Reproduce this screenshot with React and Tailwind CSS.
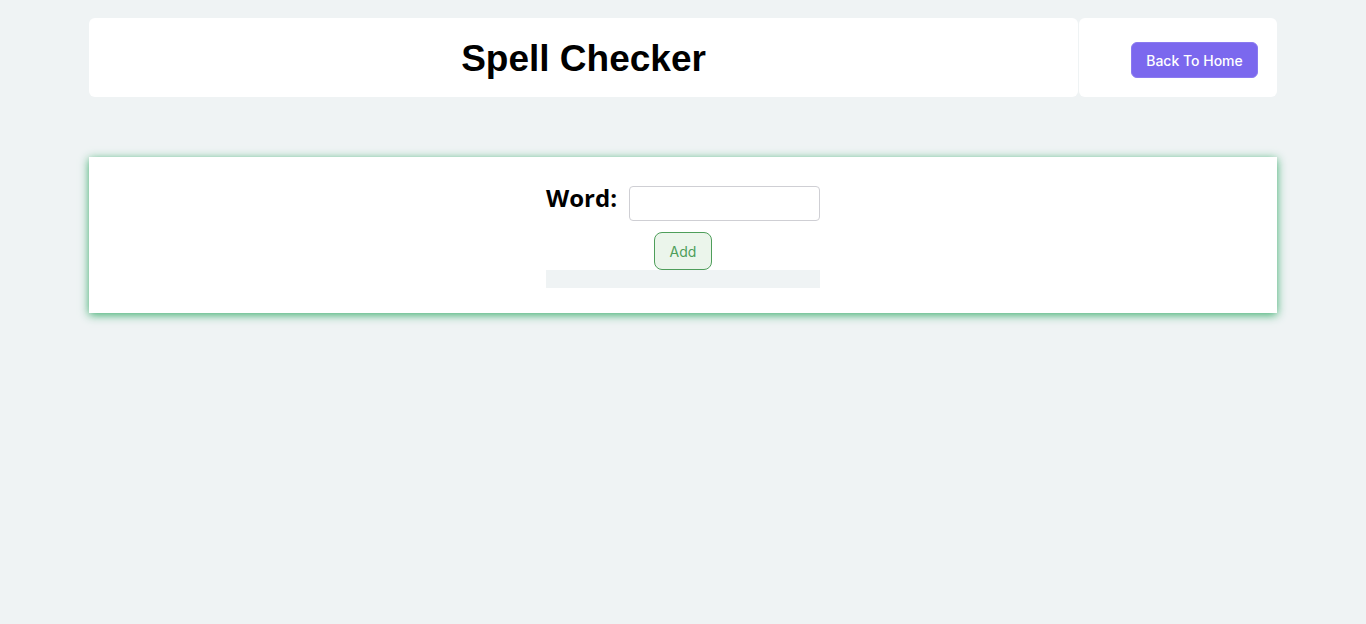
export default function App() {
  return (
    <div className="min-h-[624px] bg-[#eff3f4] font-['Inter',sans-serif]">
      {/* Header */}
      <div className="mx-[89px] pt-[18px] flex gap-px">
        <div className="flex-1 h-[79px] bg-white rounded-md flex items-center justify-center">
          <h1 className="font-['Liberation_Sans',Arial,sans-serif] font-bold text-[37px] text-black leading-none pt-[2px]">
            Spell Checker
          </h1>
        </div>
        <div className="w-[198px] h-[79px] bg-white rounded-md flex items-center justify-end pr-[19px] pt-[5px]">
          <button className="h-[36px] w-[127px] rounded-md bg-[#7b68ee] text-white text-[14px] font-medium border border-[#8a7af0]">
            Back To Home
          </button>
        </div>
      </div>

      {/* Card */}
      <div className="mx-[89px] mt-[60px] bg-white shadow-[0_2px_9px_rgba(40,165,95,0.9)] pt-[29px] pb-[25px] flex justify-center">
        <div className="w-[274px] flex flex-col">
          <div className="flex items-center justify-between">
            <label className="font-['Open_Sans',sans-serif] text-[24px] font-bold text-black leading-none pb-[11px]">
              Word:
            </label>
            <input
              type="text"
              className="w-[191px] h-[35px] border border-[#cfcfd4] rounded-[4px] outline-none px-2"
            />
          </div>
          <div className="flex justify-center mt-[11px]">
            <button className="w-[58px] h-[38px] rounded-lg bg-[#ebf5eb] border border-[#4e9e5a] text-[#4e9e5a] text-[14px]">
              Add
            </button>
          </div>
          <div className="h-[18px] bg-[#eff3f4]"></div>
        </div>
      </div>
    </div>
  );
}
